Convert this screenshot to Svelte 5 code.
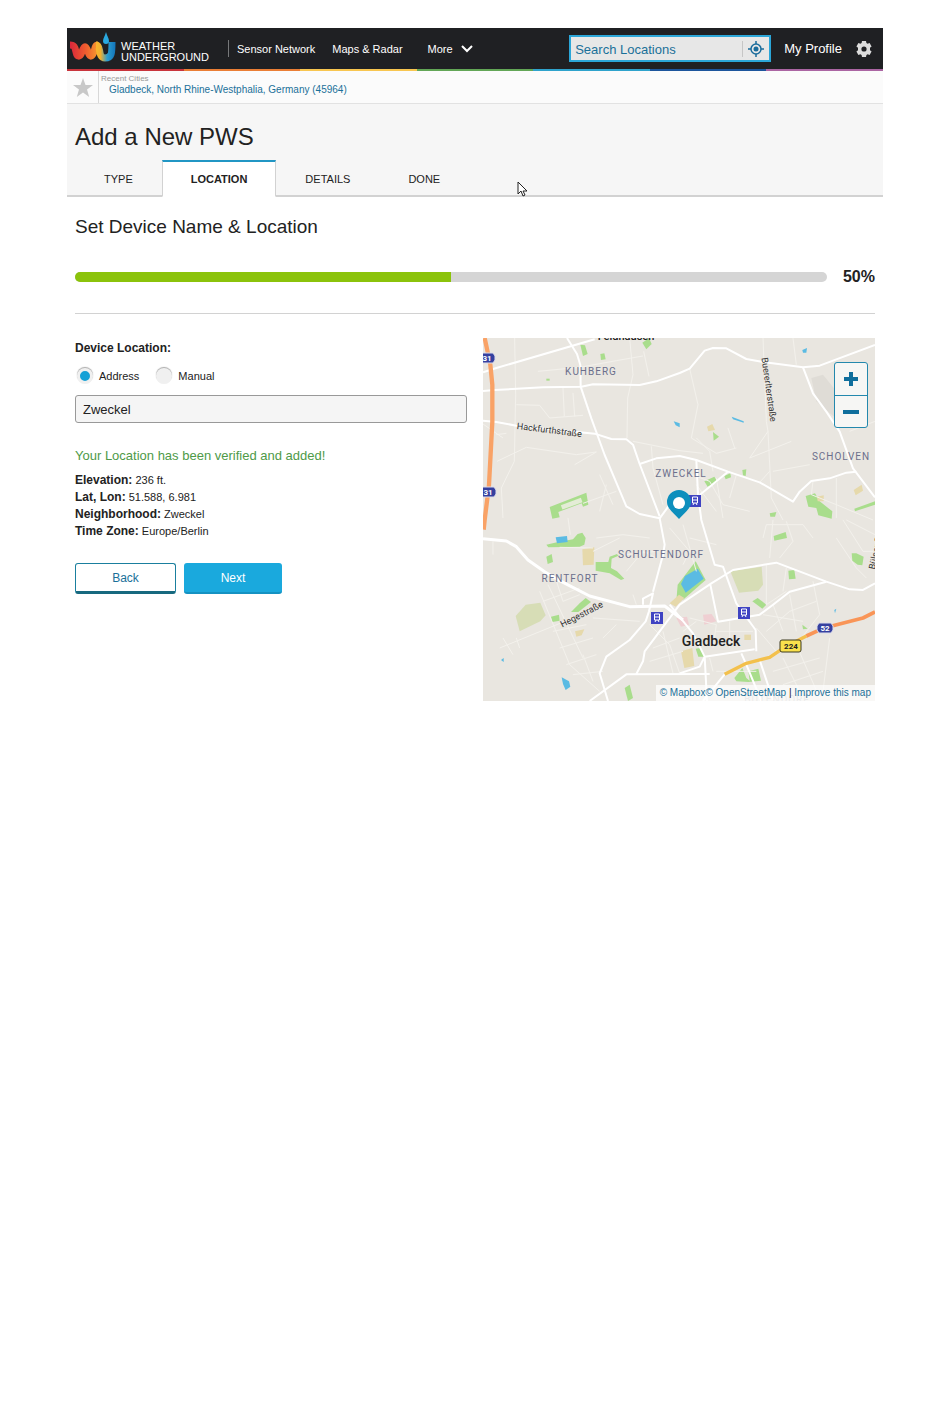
<script>
  let query = $state("");
  let mode = $state("address");
  let address = $state("Zweckel");
  let progress = $state(50);

  const navLinks = ["Sensor Network", "Maps & Radar"];
  const tabs = ["TYPE", "LOCATION", "DETAILS", "DONE"];
  let activeTab = $state("LOCATION");

  const facts = [
    { label: "Elevation:", value: "236 ft." },
    { label: "Lat, Lon:", value: "51.588, 6.981" },
    { label: "Neighborhood:", value: "Zweckel" },
    { label: "Time Zone:", value: "Europe/Berlin" },
  ];

  // map geometry, drawn at three times the map units
  const parks = [
    "M200 507 L310 464 L316 500 L300 506 L296 496 L226 522 L230 538 L208 542 Z",
    "M292 20 L306 22 L314 48 L300 54 Z",
    "M352 48 L364 46 L368 64 L354 66 Z",
    "M478 14 L498 0 L506 18 L490 34 Z",
    "M190 620 L225 612 L270 604 L284 588 L298 584 L308 600 L304 620 L290 626 L196 628 Z",
    "M190 656 L206 648 L210 672 L194 678 Z",
    "M338 672 L376 672 L380 656 L402 648 L406 653 L386 662 L384 690 L402 700 L424 722 L414 726 L380 706 L338 698 Z",
    "M264 822 L290 796 L308 780 L324 792 L286 822 Z",
    "M204 836 L228 830 L230 848 L208 852 Z",
    "M580 790 L584 740 L638 670 L668 726 L602 784 Z",
    "M425 1050 L440 1040 L450 1080 L435 1089 Z",
    "M664 430 L694 416 L704 432 L674 446 Z",
    "M724 414 L742 406 L744 418 L728 424 Z",
    "M690 282 L708 296 L692 308 Z",
    "M778 396 L790 394 L788 414 L780 412 Z",
    "M968 474 L996 466 L1010 490 L1048 520 L1046 542 L1006 532 L1000 510 L976 506 Z",
    "M860 526 L880 522 L876 536 L862 536 Z",
    "M1114 512 L1176 490 L1176 500 L1116 520 Z",
    "M872 594 L908 582 L912 600 L874 608 Z",
    "M1106 646 L1120 646 L1142 656 L1138 682 L1124 680 L1108 668 Z",
    "M916 698 L934 696 L938 722 L918 724 Z",
    "M808 790 L824 780 L850 800 L838 812 Z",
    "M754 1020 L778 990 L790 1020 L800 1028 L796 1000 L826 992 L834 1028 L796 1032 L760 1030 Z",
    "M638 932 L652 930 L664 956 L646 956 Z",
    "M958 860 L974 872 L960 874 Z",
    "M190 122 h10 v6 h-10 Z",
  ];
  const fields = [
    "M98 834 L128 800 L172 794 L188 832 L172 850 L110 880 Z",
    "M742 700 L836 686 L840 740 L826 758 L768 764 Z",
  ];
  const sands = [
    "M298 634 L334 628 L332 680 L300 682 Z",
    "M276 880 L304 874 L296 892 L280 896 Z",
    "M560 796 L588 770 L604 780 L578 806 Z",
    "M672 266 L688 258 L696 276 L676 280 Z",
    "M1002 476 L1022 472 L1022 490 L1004 490 Z",
    "M1112 456 L1136 440 L1140 458 L1118 472 Z",
    "M594 940 L628 930 L634 984 L604 990 Z",
    "M784 890 h20 v16 h-20 Z",
  ];
  const waters = [
    "M218 598 L252 594 L254 612 L222 616 Z",
    "M594 738 L606 714 L644 692 L662 722 L608 764 Z",
    "M236 1018 L258 1030 L262 1046 L248 1056 L240 1038 Z",
    "M746 236 L782 250 L782 254 L750 244 Z",
    "M958 36 L972 30 L970 44 L960 44 Z",
    "M572 250 L590 256 L590 268 L578 262 Z",
    "M1054 816 L1060 812 L1056 826 Z",
    "M54 966 L62 960 L62 972 Z",
  ];
  const streets = [
    "M95 0 L98 170 L94 370 L55 450 L60 540",
    "M100 200 L170 202 L200 240 L300 232 M240 150 L244 235 M270 165 L275 235",
    "M440 0 L450 110 L434 180 L432 300 M482 40 L498 115",
    "M165 100 L290 88 L400 68 L480 54",
    "M40 290 L70 286 M42 370 L130 328 L280 350 L340 342 L275 380",
    "M450 310 L590 338 L660 346 M505 325 L510 390 L540 500",
    "M0 258 L60 300 M350 410 L390 500 M300 496 L400 460 M370 440 L350 520",
    "M620 92 L645 200 L625 300 L700 346 L760 330 M735 270 L755 330",
    "M840 0 L850 250 L855 280 L800 360 M855 280 L865 480 L900 546 M800 360 L925 310",
    "M930 0 L940 80 M640 300 L680 340 L690 400 M600 400 L680 430 L720 500 L800 520",
    "M700 420 L720 540 M760 410 L740 480 M640 440 L700 520 M830 433 L860 400",
    "M870 400 L980 380 M990 430 L985 470 L1060 500 L1170 546 M1060 420 L1060 540",
    "M30 610 L30 650 M255 540 L262 590 M230 628 L330 630 M340 600 L420 590 L500 600",
    "M330 640 L410 600 M430 650 L520 640 M430 700 L480 640 L520 660",
    "M50 930 L290 832 M60 900 L90 950 M170 760 L260 980 L350 1060",
    "M195 740 L300 960 M220 728 L240 790 L290 770 M180 790 L290 750 M100 900 L110 930",
    "M210 880 L310 860 M230 930 L330 900 M250 980 L340 950 M270 1010 L360 1000 M300 950 L330 1030",
    "M450 770 L460 800 M330 840 L470 850 M360 900 L400 860",
    "M500 860 L560 920 L590 1006 M510 930 L590 900 M540 880 L570 1006 M500 970 L600 940",
    "M620 600 L700 620 M600 560 L640 700 M560 570 L620 640 L600 680",
    "M840 600 L850 560 L960 560 L990 600 M870 546 L860 660 M910 550 L930 610 L890 660",
    "M1080 546 L1140 640 L1170 640 M1060 600 L1120 690 L1150 720",
    "M850 680 L850 800 L910 760 M910 690 L900 760 M990 730 L1010 830 L960 894",
    "M840 830 L960 850 M870 800 L900 880 M920 770 L940 880 M850 880 L920 820 L1000 790",
    "M820 870 L880 940 M900 960 L960 1080 M940 920 L1010 1080 M870 1000 L1010 960 M900 1040 L1020 1000",
    "M1040 900 L1020 1060 M620 840 L700 860 L690 930 M740 850 L740 930 M700 880 L810 880",
    "M600 880 L640 850 M680 960 L690 1000 M600 1050 L760 1050 M700 1000 L820 1000",
    "M1090 546 L1176 590 M1100 280 L1176 250",
  ];
  const roads = [
    "M0 103 L40 90 L335 4",
    "M0 159 L35 156 L180 148 L295 146 L330 139 L470 141 L520 130 L590 105 L620 92 L665 38 L690 30 L730 31 L790 63 L840 72 L960 88 L1010 83 L1176 21",
    "M252 0 L282 48 L292 81 L293 146 L325 241 L365 351 L405 446 L430 505 L470 528 L530 541 L545 620 L540 650 L510 761",
    "M0 248 L40 252 L100 263 L335 287 L385 303 L430 304 L450 320 L470 378 L530 535",
    "M470 378 L520 361 L590 354 L640 366 L735 401 L830 433 L930 491 L950 461 L985 429 L1040 421 L1090 404 L1120 401",
    "M960 88 L990 166 L1030 221 L1070 281 L1110 391 L1176 478",
    "M320 1089 L430 1009 L680 1008 M460 1008 L480 970 L485 940 L530 880 L590 800 L685 736 L750 696 L880 674 L1030 731 L1100 754 L1140 756 L1176 736",
    "M1030 731 L920 761 L870 800 L830 830 L705 851 L682 740",
    "M640 366 L645 470 L655 546 L695 680 L720 686 L760 796 L818 876 L820 940",
    "M480 800 L480 782 L510 766 L498 820 L488 850 L440 906 L370 956 L350 1006 L375 1089",
    "M735 401 L650 471 M530 541 L560 500",
    "M560 800 L630 886 L665 956 L815 934 M665 956 L650 986 L590 1006 M665 956 L672 1089",
    "M775 946 L790 980 L835 1089 M725 1009 L660 1089 M830 966 L870 1086",
  ];
</script>

{#snippet station(x, y)}
  <g transform="translate({x} {y})">
    <rect width="12" height="12" fill="#3f43c2" />
    <path d="M3.5 2h5v6h-5zM3.5 5h5M4 10l1-2M8 10l-1-2" fill="none" stroke="#fff" />
  </g>
{/snippet}

{#snippet shield(x, y, number)}
  <g transform="translate({x} {y})">
    <path d="M-6 -5H6L8 -2V2L6 5H-6L-8 2V-2Z" fill="#35409f" stroke="#dcdcea" />
    <text class="road-number" y="3">{number}</text>
  </g>
{/snippet}

<div class="page">
  <header class="topbar">
    <a class="logo" href="#home">
      <svg width="47" height="34" viewBox="0 0 47 34" aria-hidden="true">
        <defs>
          <linearGradient id="wave" gradientUnits="userSpaceOnUse" x1="0" y1="0" x2="30" y2="0">
            <stop offset="0" stop-color="#d9263b" />
            <stop offset="0.5" stop-color="#ef5a2f" />
            <stop offset="1" stop-color="#f9a22f" />
          </linearGradient>
          <linearGradient id="cup" gradientUnits="userSpaceOnUse" x1="24" y1="0" x2="46" y2="0">
            <stop offset="0" stop-color="#fdb82c" />
            <stop offset="0.3" stop-color="#f0b030" />
            <stop offset="0.6" stop-color="#2b9ed0" />
            <stop offset="1" stop-color="#1272b8" />
          </linearGradient>
        </defs>
        <path d="M0 13C5 13 5 16 6 20C7 25 10 26 12 20C14 13 16 13 18 20C20 26 22 25 24 20C25 16 25 13 28 13" fill="none" stroke="url(#wave)" stroke-width="7" />
        <path d="M26 13C32 13 27 26 35 26C42 26 42 21 42 10" fill="none" stroke="url(#cup)" stroke-width="7" />
        <path d="M36 0C37 4 39 6 39 9A3 3 0 0 1 33 9C33 6 35 4 36 0Z" fill="#2aa9e0" />
      </svg>
      <span>WEATHER<br />UNDERGROUND</span>
    </a>
    <nav>
      {#each navLinks as link}
        <a href="#nav">{link}</a>
      {/each}
      <button class="more">
        More
        <svg width="12" height="8" viewBox="0 0 12 8" aria-hidden="true"><path d="M1 1l5 5 5-5" fill="none" stroke="#fff" stroke-width="2" /></svg>
      </button>
    </nav>
    <form class="search" onsubmit={(e) => e.preventDefault()}>
      <input type="text" aria-label="Search Locations" placeholder="Search Locations" bind:value={query} />
      <button type="button" aria-label="Use my location">
        <svg width="16" height="16" viewBox="0 0 16 16" aria-hidden="true">
          <circle cx="8" cy="8" r="5" fill="none" stroke="#1a6c9c" stroke-width="1.5" />
          <circle cx="8" cy="8" r="2.5" fill="#1a6c9c" />
          <path d="M8 0v3M8 13v3M0 8h3M13 8h3" stroke="#1a6c9c" stroke-width="1.5" />
        </svg>
      </button>
    </form>
    <a class="profile" href="#profile">My Profile</a>
    <button class="gear" aria-label="Settings">
      <svg width="16" height="16" viewBox="0 0 16 16" aria-hidden="true">
        <path fill="#dcdcdc" fill-rule="evenodd" d="M6 0h4l.4 2 1.200.7 2-.7 2 3.400L14 6.800v2.400l1.600 1.400-2 3.400-2-.7-1.200.7L10 16H6l-.4-2-1.200-.7-2 .7-2-3.400L2 9.200V6.800L.4 5.400l2-3.400 2 .7L5.600 2zM8 5.400a2.600 2.600 0 1 0 0 5.200a2.600 2.600 0 0 0 0-5.200z" />
      </svg>
    </button>
  </header>
  <div class="stripe"></div>

  <div class="recent">
    <button class="star" aria-label="Add to favorites">
      <svg width="20" height="19" viewBox="0 0 20 19" aria-hidden="true"><path d="M10 0l2.500 7H20l-6 4.500L16.200 19 10 14.500 3.800 19 6 11.500 0 7h7.500z" fill="#c8c8c8" /></svg>
    </button>
    <div class="cities">
      <span>Recent Cities</span>
      <a href="#city">Gladbeck, North Rhine-Westphalia, Germany (45964)</a>
    </div>
  </div>

  <section class="heading">
    <h1>Add a New PWS</h1>
    <div class="tabs">
      {#each tabs as tab}
        <button class="tab" class:active={tab === activeTab} onclick={() => (activeTab = tab)}>{tab}</button>
      {/each}
      <svg class="cursor" width="11" height="16" viewBox="0 0 11 16" aria-hidden="true">
        <path d="M1 1v12l3-3 2 5 2-1-2-4h4z" fill="#fff" stroke="#222" />
      </svg>
    </div>
  </section>

  <main>
    <h2>Set Device Name &amp; Location</h2>
    <div class="progress">
      <div class="track"><div class="fill" style="width: {progress}%"></div></div>
      <strong>{progress}%</strong>
    </div>

    <div class="columns">
      <form onsubmit={(e) => e.preventDefault()}>
        <fieldset>
          <legend>Device Location:</legend>
          <label><input type="radio" name="mode" value="address" bind:group={mode} />Address</label>
          <label><input type="radio" name="mode" value="manual" bind:group={mode} />Manual</label>
        </fieldset>
        <input class="address" type="text" aria-label="Address" bind:value={address} />
        <p class="verified">Your Location has been verified and added!</p>
        <ul class="facts">
          {#each facts as fact}
            <li><strong>{fact.label}</strong> {fact.value}</li>
          {/each}
        </ul>
        <div class="actions">
          <button class="back" type="button">Back</button>
          <button class="next" type="submit">Next</button>
        </div>
      </form>

      <div class="map">
        <svg class="tiles" viewBox="0 0 392 363" preserveAspectRatio="xMidYMid slice">
          <rect width="392" height="363" fill="#e9e6e0" />
          <g transform="scale(0.33333)" fill="none" stroke-linejoin="round">
            <path d="M985 120L1020 110L1060 160L1070 250L1040 225L1000 190Z" fill="#dfdcd6" />
            <path d="M580 840L612 836L618 860L594 866Z M660 830L686 828L700 850L664 860Z" fill="#efcfd2" />
            {#each fields as d}<path {d} fill="#d7ddb6" />{/each}
            {#each parks as d}<path {d} fill="#a9dd8c" />{/each}
            {#each sands as d}<path {d} fill="#e6d9ab" />{/each}
            {#each waters as d}<path {d} fill="#5bbbe3" />{/each}
            <path d="M236 508L296 486" stroke="#e4ecd6" stroke-width="14" />
            {#each streets as d}<path {d} stroke="#f3f1ec" stroke-width="3" />{/each}
            {#each roads as d}<path {d} stroke="#fff" stroke-width="6" />{/each}
            <path d="M0 602L70 609L100 626L135 666L185 701L230 728L320 774L440 806L545 804L600 846" stroke="#fff" stroke-width="9" />
            <path d="M5 0L22 80L28 141L28 251L18 441L5 546L2 575" stroke="#f9a266" stroke-width="13" />
            <path d="M725 1009L790 976L860 958L900 931L970 894" stroke="#f3c04c" stroke-width="10" />
            <path d="M970 894L1020 871L1140 840L1176 822" stroke="#f99557" stroke-width="11" />
          </g>
          <text class="town" x="143" y="2">Feldhausen</text>
          <text class="area" x="108" y="37">KUHBERG</text>
          <text class="area" x="198" y="139">ZWECKEL</text>
          <text class="area" x="358" y="122">SCHOLVEN</text>
          <text class="area" x="178" y="220">SCHULTENDORF</text>
          <text class="area" x="87" y="244">RENTFORT</text>
          <text class="area faint" x="294" y="365">BUTENDORF</text>
          <text class="street" transform="translate(66 95) rotate(7)">Hackfurthstraße</text>
          <text class="street" transform="translate(283 52) rotate(82)">Buererlterstraße</text>
          <text class="street" transform="translate(100 279) rotate(-27)">Hegestraße</text>
          <text class="street" transform="translate(396 212) rotate(-78)">Bülser Str.</text>
          <text class="city" x="228" y="308">Gladbeck</text>
          {@render station(206, 157)}
          {@render station(168, 274)}
          {@render station(255, 269)}
          {@render shield(4, 20, "31")}
          {@render shield(5, 154, "31")}
          {@render shield(342, 290, "52")}
          <rect x="297" y="302" width="21" height="12" rx="2" fill="#f9e04c" stroke="#3c3a20" />
          <text class="road-number dark" x="308" y="311">224</text>
          <path d="M196 181C192 176 184 171 184 164A12 12 0 0 1 208 164C208 171 200 176 196 181Z" fill="#0d8fbd" />
          <circle cx="196" cy="165" r="6" fill="#fff" />
        </svg>
        <div class="zoom">
          <button aria-label="Zoom in"><svg width="14" height="14" viewBox="0 0 14 14"><path d="M7 0v14M0 7h14" stroke="#0f6e9c" stroke-width="4" /></svg></button>
          <button aria-label="Zoom out"><svg width="16" height="14" viewBox="0 0 16 14"><path d="M0 7h16" stroke="#0f6e9c" stroke-width="4" /></svg></button>
        </div>
        <div class="credits">
          <a href="#mapbox">© Mapbox</a><a href="#osm">© OpenStreetMap</a> | <a href="#improve">Improve this map</a>
        </div>
      </div>
    </div>
  </main>
</div>

<style>
  :global(body) {
    background: #fff;
  }

  .page {
    margin: 28px 67px;
    font-family: "Liberation Sans", Arial, sans-serif;
    font-size: 11px;
    color: #222;
  }

  .page * {
    box-sizing: border-box;
  }

  a {
    color: #1a7099;
    text-decoration: none;
  }

  button,
  input {
    font-family: inherit;
    font-size: inherit;
    color: inherit;
    margin: 0;
  }

  button {
    padding: 0;
    border: none;
    background: none;
    cursor: pointer;
  }

  svg {
    display: block;
  }

  .topbar {
    display: flex;
    align-items: center;
    height: 41px;
    padding: 0 11px 0 3px;
    background: #1f2023;
    color: #fff;
  }

  .topbar a {
    color: #fff;
  }

  .logo {
    display: flex;
    align-items: center;
    gap: 4px;
    font-size: 11px;
    line-height: 11px;
  }

  .logo span {
    padding-top: 6px;
  }

  nav {
    display: flex;
    align-items: center;
    gap: 17px;
    height: 17px;
    margin-left: 19px;
    padding-left: 8px;
    border-left: 1px solid #77787a;
  }

  .more {
    display: flex;
    align-items: center;
    gap: 8px;
    margin-left: 8px;
  }

  .search {
    display: flex;
    align-items: center;
    width: 202px;
    height: 27px;
    margin-left: auto;
    border: 2px solid #2ba6d8;
    background: #e7e7e7;
  }

  .search input {
    flex: 1;
    min-width: 0;
    padding: 2px 4px 0;
    border: none;
    outline: none;
    background: none;
    font-size: 13px;
    color: #1a7099;
  }

  .search input::placeholder {
    color: #1a7099;
    opacity: 1;
  }

  .search button {
    padding: 0 5px;
    border-left: 1px solid #c6c6c6;
  }

  .profile {
    margin: 0 14px 0 13px;
    font-size: 13px;
  }

  .stripe {
    height: 2px;
    background: linear-gradient(
      to right,
      #c8343c 0 14.3%,
      #ea7e35 14.3% 28.6%,
      #f8c650 28.6% 42.9%,
      #62a656 42.9% 57.1%,
      #2fa3cc 57.1% 71.4%,
      #1c559c 71.4% 85.7%,
      #ab65a3 85.7%
    );
  }

  .recent {
    display: flex;
    height: 33px;
    border-bottom: 1px solid #e2e2e2;
    background: #fbfbfb;
  }

  .star {
    width: 32px;
    padding-left: 6px;
    border-right: 1px solid #d8d8d8;
  }

  .cities {
    display: flex;
    flex-direction: column;
    padding: 3px 2px;
    font-size: 10px;
    line-height: 14px;
  }

  .cities span {
    font-size: 8px;
    line-height: 9px;
    color: #999;
  }

  .cities a {
    padding-left: 8px;
  }

  .heading {
    padding: 18px 8px 0;
    border-bottom: 2px solid #d2d2d2;
    background: #f6f6f6;
  }

  h1 {
    margin: 0;
    font-size: 24px;
    font-weight: normal;
    line-height: 30px;
  }

  .tabs {
    display: flex;
    height: 37px;
    margin: 8px 0 -2px;
  }

  .tab {
    padding: 0 28px;
    border: 1px solid transparent;
    border-top: 2px solid transparent;
  }

  .tab.active {
    border-color: #2196c4 #d2d2d2 #fff;
    background: #fff;
    font-weight: bold;
  }

  .cursor {
    margin: 21px 0 0 48px;
  }

  main {
    padding: 0 8px;
  }

  h2 {
    margin: 0;
    padding: 18px 0;
    font-size: 19px;
    font-weight: normal;
    line-height: 24px;
  }

  .progress {
    display: flex;
    align-items: center;
    gap: 16px;
    padding: 10px 0 26px;
    border-bottom: 1px solid #d2d2d2;
    font-size: 16px;
    line-height: 20px;
  }

  .track {
    flex: 1;
    height: 10px;
    border-radius: 5px;
    background: #d5d5d5;
    overflow: hidden;
  }

  .fill {
    height: 100%;
    background: #8bc30b;
  }

  .columns {
    display: grid;
    grid-template-columns: 1fr 1fr;
    gap: 16px;
    padding-top: 24px;
  }

  fieldset {
    display: flex;
    gap: 17px;
    margin: 0;
    padding: 13px 2px 11px;
    border: none;
  }

  legend {
    margin-left: -2px;
    padding: 3px 0 0;
    font-size: 12px;
    font-weight: bold;
    line-height: 14px;
  }

  label {
    display: flex;
    align-items: center;
    gap: 6px;
  }

  input[type="radio"] {
    appearance: none;
    width: 16px;
    height: 16px;
    border: 3px solid #f0f0f0;
    border-radius: 50%;
    background: #f0f0f0;
    box-shadow: 0 -1px 1px #aaa;
  }

  input[type="radio"]:checked {
    background: #16a1d6;
  }

  .address {
    display: block;
    width: 100%;
    height: 28px;
    padding: 0 7px;
    border: 1px solid #999;
    border-radius: 3px;
    background: #f5f5f5;
    font-size: 13px;
  }

  .verified {
    margin: 0;
    padding: 24px 0 8px;
    font-size: 13px;
    line-height: 17px;
    color: #4e9a48;
  }

  .facts {
    margin: 0;
    padding: 0;
    list-style: none;
    line-height: 17px;
  }

  .facts strong {
    font-size: 12px;
    line-height: 16px;
  }

  .actions {
    display: flex;
    gap: 8px;
    padding-top: 23px;
    font-size: 12px;
  }

  .back,
  .next {
    width: 101px;
    height: 31px;
    border-radius: 3px;
  }

  .back {
    border: 1px solid #1a7f9e;
    border-bottom: 3px solid #17697f;
    color: #1a7099;
  }

  .next {
    width: 98px;
    border-bottom: 2px solid #1592c2;
    background: #1aa9dd;
    color: #fff;
  }

  .map {
    position: relative;
    overflow: hidden;
  }

  .tiles {
    width: 100%;
    aspect-ratio: 392 / 363;
  }

  .area {
    font: 10px Roboto, sans-serif;
    fill: #6b6f8c;
    letter-spacing: 1px;
    text-anchor: middle;
  }

  .faint {
    fill: #b9b9b9;
  }

  .town,
  .city {
    font: 500 11px Roboto, sans-serif;
    text-anchor: middle;
    fill: #222;
  }

  .city {
    font-size: 14px;
  }

  .street {
    font: 9px Roboto, sans-serif;
    fill: #333;
    text-anchor: middle;
  }

  .road-number {
    font: bold 8px Roboto, sans-serif;
    fill: #fff;
    text-anchor: middle;
  }

  .road-number.dark {
    fill: #222;
  }

  /* controls float over the map */
  .zoom {
    position: absolute;
    top: 24px;
    right: 7px;
    display: flex;
    flex-direction: column;
    border: 1px solid #2388ad;
    border-radius: 3px;
    background: #f6f6f4;
  }

  .zoom button {
    display: grid;
    place-items: center;
    width: 32px;
    height: 32px;
  }

  .zoom button + button {
    border-top: 1px solid #2388ad;
  }

  .credits {
    position: absolute;
    right: 0;
    bottom: 0;
    padding: 2px 4px;
    background: rgba(255, 255, 255, 0.7);
    font-size: 10px;
    line-height: 12px;
  }
</style>
